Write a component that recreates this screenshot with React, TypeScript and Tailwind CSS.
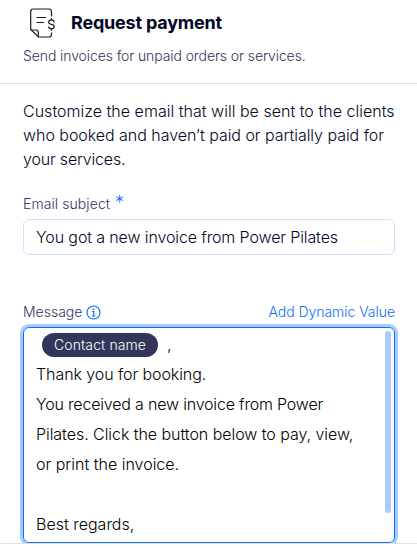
import type { ReactNode } from "react";

function InvoiceIcon() {
  return (
    <svg width="26" height="30" viewBox="0 0 26 30" fill="none" stroke="#1c1c1c" strokeWidth="1.2" className="shrink-0">
      <path d="M21.5 8.5V3.5a2.5 2.5 0 0 0-2.5-2.5H3.2a2.5 2.5 0 0 0-2.5 2.5V21.5L8.5 29H19a2.5 2.5 0 0 0 2.5-2.5V24.5" />
      <path d="M.8 22H6a2.3 2.3 0 0 1 2.3 2.3v4.4" />
      <path d="M6.5 9.5H16M6.5 14.5H14" strokeWidth="1.2" />
      <path d="M24 14.2c0-1.4-1.2-2.3-2.6-2.3s-2.7.8-2.7 2.3c0 3 5.6 1.5 5.6 4.4 0 1.4-1.3 2.2-2.8 2.2s-2.9-.8-2.9-2.3M21.5 10v1.9M21.5 20.8v2" />
    </svg>
  );
}

function InfoIcon() {
  return (
    <svg width="15" height="15" viewBox="0 0 15 15" fill="none" stroke="#116dff" className="shrink-0">
      <circle cx="7.5" cy="7.5" r="6.5" strokeWidth="1.2" />
      <path d="M6 6.5h1.8V11M5.8 11h3.7" strokeWidth="1.2" />
      <path d="M6.8 4.3h1.5" strokeWidth="1.6" />
    </svg>
  );
}

function Line({ children, className = "" }: { children?: ReactNode; className?: string }) {
  return <p className={`h-[30px] whitespace-nowrap leading-[30px] ${className}`}>{children}</p>;
}

export default function App() {
  return (
    <div className="flex h-[548px] w-[417px] flex-col overflow-hidden bg-white font-['Inter','Liberation_Sans',sans-serif] font-[350] text-[#000624]">
      <header className="h-[84px] shrink-0 border-b border-[#dfe0e2] pl-[23px]">
        <div className="flex h-[45px] items-center gap-[15px] pl-[7px]">
          <InvoiceIcon />
          <h1 className="whitespace-nowrap text-[18px] font-bold leading-6 tracking-[-0.2px]">Request payment</h1>
        </div>
        <p className="mt-0.5 whitespace-nowrap text-sm leading-[18px] tracking-[-0.1px] text-[#32365a]">
          Send invoices for unpaid orders or services.
        </p>
      </header>

      <main className="flex h-[459px] shrink-0 flex-col overflow-hidden pt-[15px] pr-[22px] pl-[23px]">
        <div className="whitespace-nowrap text-base leading-6">
          <p className="tracking-[0.02px]">Customize the email that will be sent to the clients</p>
          <p className="tracking-[-0.04px]">who booked and haven’t paid or partially paid for</p>
          <p className="tracking-[-0.18px]">your services.</p>
        </div>

        <label className="mt-6 flex h-[18px] gap-[5px] text-sm leading-[18px] text-[#32365a]">
          <span className="tracking-[0.08px]">Email subject</span>
          <span className="-mt-px text-[18px] text-[#116dff]">*</span>
        </label>
        <div className="mt-1.5 flex h-9 shrink-0 items-center whitespace-nowrap rounded-md border border-[#cfe1ff] px-3 text-base tracking-[-0.12px]">
          <span>You got a new invoice from Power Pilates</span>
        </div>

        <div className="mt-12 flex h-[18px] items-center text-sm leading-[18px]">
          <span className="text-[#32365a]">Message</span>
          <span className="ml-1">
            <InfoIcon />
          </span>
          <a className="ml-auto tracking-[-0.04px] text-[#116dff]">Add Dynamic Value</a>
        </div>
        <div className="mt-1.5 flex h-[216px] shrink-0 justify-between rounded-md border border-[#116dff] pr-[3px] pl-3 ring-3 ring-[#a3cdff]">
          <div className="pt-px text-base text-black">
            <Line className="flex items-center">
              <span className="mt-0.5 ml-[6px] flex h-6 w-[116px] items-center justify-center rounded-full bg-[#32365a] text-sm tracking-[0.1px] text-white">
                Contact name
              </span>
              <span className="ml-[9px]">,</span>
            </Line>
            <Line className="tracking-[-0.08px]">Thank you for booking.</Line>
            <Line className="tracking-[-0.19px]">You received a new invoice from Power</Line>
            <Line className="tracking-[-0.05px]">Pilates. Click the button below to pay, view,</Line>
            <Line>or print the invoice.</Line>
            <Line />
            <Line>Best regards,</Line>
          </div>
          <div className="mt-[3px] h-[182px] w-1.5 rounded-full bg-[#a8caff]" />
        </div>
      </main>
      <div className="h-px shrink-0 bg-[#dfe0e2]" />
    </div>
  );
}
